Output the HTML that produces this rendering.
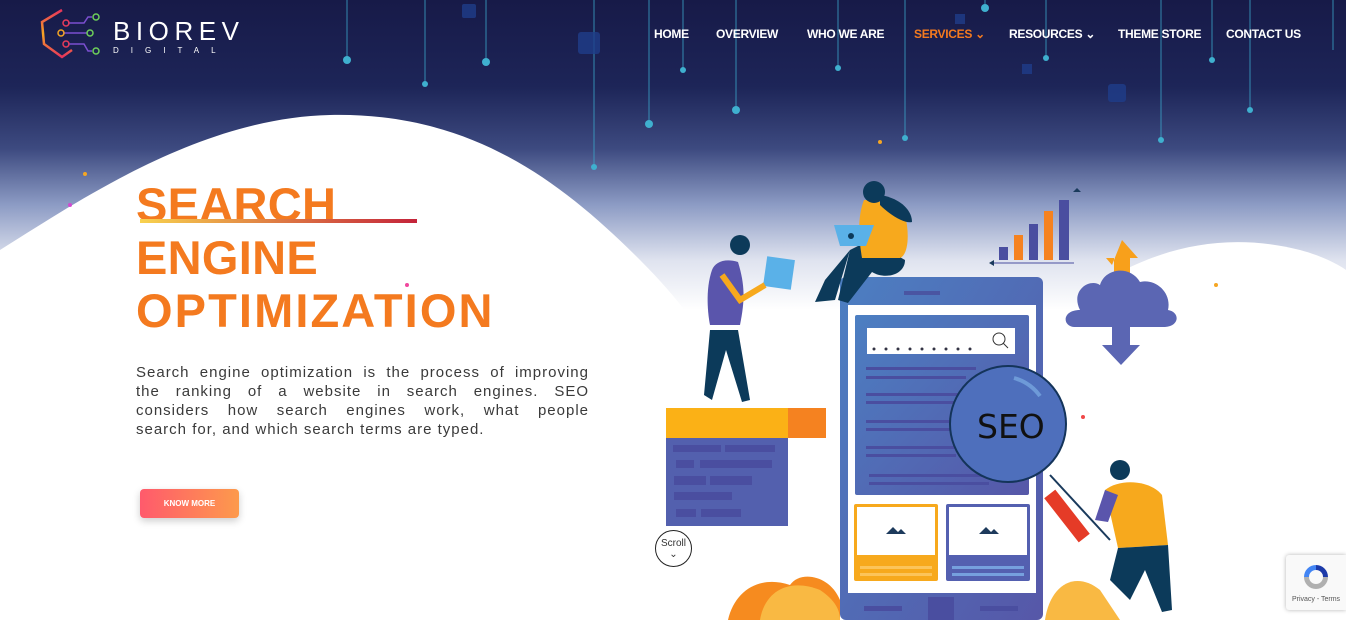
<!DOCTYPE html>
<html><head><meta charset="utf-8"><style>
*{margin:0;padding:0;box-sizing:border-box}
body{width:1346px;height:620px;overflow:hidden;position:relative;font-family:"Liberation Sans",sans-serif;background:#fff}
#bg{position:absolute;left:0;top:0}
.nav{position:absolute;top:27px;font-size:12px;font-weight:bold;color:#fff;letter-spacing:-0.3px}
.nav span{position:absolute;white-space:nowrap}
h1{position:absolute;left:136px;top:178px;font-size:47px;line-height:53px;color:#f47a1f;font-weight:bold;letter-spacing:0.3px}
h1 .o{letter-spacing:2.1px}
.ul{position:absolute;left:140px;top:219px;width:277px;height:4px;background:linear-gradient(90deg,#f8d24e,#c4233a)}
.p{position:absolute;left:136px;top:363px;width:453px;font-size:15px;line-height:19px;color:#3a3a3a;letter-spacing:1px}
.p div{text-align:justify;text-align-last:justify;white-space:nowrap}
.p div.l{text-align-last:left}
.btn{position:absolute;left:140px;top:489px;width:99px;height:29px;border-radius:4px;background:linear-gradient(90deg,#ff5a6c,#fd9a4c);color:#fff;font-size:8px;font-weight:bold;text-align:center;line-height:29px;box-shadow:0 3px 8px rgba(0,0,0,.2)}
.scroll{position:absolute;left:655px;top:530px;width:37px;height:37px;border:1px solid #222;border-radius:50%;font-size:10px;text-align:center;padding-top:7px;color:#333;background:#fff}
.cap{position:absolute;left:1286px;top:555px;width:60px;height:55px;background:#f9f9f9;box-shadow:0 0 4px rgba(0,0,0,.3);border-radius:3px 0 0 3px;font-size:7px;color:#555;text-align:center}
</style></head><body>
<svg id="bg" width="1346" height="620" viewBox="0 0 1346 620">
<defs>
<linearGradient id="sky" x1="0" y1="0" x2="0" y2="1">
<stop offset="0" stop-color="#171a48"/><stop offset="0.14" stop-color="#1d2558"/><stop offset="0.24" stop-color="#3d4a80"/><stop offset="0.33" stop-color="#8c9bc4"/><stop offset="0.42" stop-color="#dfe3ef"/><stop offset="0.5" stop-color="#fff"/></linearGradient>
<linearGradient id="ph" x1="0" y1="0" x2="1" y2="1"><stop offset="0" stop-color="#4c7fc2"/><stop offset="1" stop-color="#5657a8"/></linearGradient>
<linearGradient id="lg" x1="0" y1="0" x2="0" y2="1"><stop offset="0" stop-color="#e8345c"/><stop offset=".5" stop-color="#f5a623"/><stop offset="1" stop-color="#e8345c"/></linearGradient>
</defs>
<rect width="1346" height="620" fill="url(#sky)"/>
<path d="M0 250 C80 200 200 118 330 115 C470 112 560 180 640 260 C680 300 700 330 720 360 L720 620 L0 620Z" fill="#fff"/>
<path d="M1090 290 C1150 250 1220 230 1300 250 C1330 258 1346 270 1346 270 L1346 620 L1090 620Z" fill="#fff"/>
<g stroke="#3aa5c9" stroke-width="1" opacity=".8">
<line x1="347" y1="0" x2="347" y2="60"/><line x1="425" y1="0" x2="425" y2="84"/><line x1="486" y1="0" x2="486" y2="62"/><line x1="594" y1="0" x2="594" y2="167"/><line x1="649" y1="0" x2="649" y2="124"/><line x1="683" y1="0" x2="683" y2="70"/><line x1="736" y1="0" x2="736" y2="110"/><line x1="838" y1="0" x2="838" y2="68"/><line x1="905" y1="0" x2="905" y2="138"/><line x1="1046" y1="0" x2="1046" y2="58"/><line x1="1161" y1="0" x2="1161" y2="140"/><line x1="1212" y1="0" x2="1212" y2="60"/><line x1="1250" y1="0" x2="1250" y2="110"/><line x1="1333" y1="0" x2="1333" y2="50"/><line x1="985" y1="0" x2="985" y2="8"/>
</g>
<g fill="#3fb0cf"><circle cx="347" cy="60" r="4"/><circle cx="425" cy="84" r="3"/><circle cx="486" cy="62" r="4"/><circle cx="594" cy="167" r="3"/><circle cx="649" cy="124" r="4"/><circle cx="683" cy="70" r="3"/><circle cx="736" cy="110" r="4"/><circle cx="838" cy="68" r="3"/><circle cx="905" cy="138" r="3"/><circle cx="1046" cy="58" r="3"/><circle cx="1161" cy="140" r="3"/><circle cx="1212" cy="60" r="3"/><circle cx="1250" cy="110" r="3"/><circle cx="985" cy="8" r="4"/></g>
<g fill="#1f3d8a" opacity=".8"><rect x="462" y="4" width="14" height="14" rx="2"/><rect x="578" y="32" width="22" height="22" rx="3"/><rect x="1022" y="64" width="10" height="10"/><rect x="1108" y="84" width="18" height="18" rx="3"/><rect x="955" y="14" width="10" height="10"/></g>
<g fill="#f5a623"><circle cx="85" cy="174" r="2"/><circle cx="880" cy="142" r="2"/><circle cx="1216" cy="285" r="2"/></g>
<circle cx="70" cy="205" r="2" fill="#d24bd0"/><circle cx="407" cy="285" r="2" fill="#f0479e"/><circle cx="1083" cy="417" r="2" fill="#f04848"/>
<path d="M62 10 L42 22 L44 44 L62 57 L72 50" fill="none" stroke="url(#lg)" stroke-width="2.5"/>
<g stroke="#7b4fd0" stroke-width="1.5" fill="none"><path d="M68 23 H84 L88 17 H92"/><path d="M63 33 H87"/><path d="M68 44 H84 L88 51 H92"/></g>
<circle cx="66" cy="23" r="3" fill="none" stroke="#e83b5a" stroke-width="1.5"/><circle cx="61" cy="33" r="3" fill="none" stroke="#f5a623" stroke-width="1.5"/><circle cx="66" cy="44" r="3" fill="none" stroke="#e83b5a" stroke-width="1.5"/>
<g fill="none" stroke="#6ecf5a" stroke-width="1.5"><circle cx="96" cy="17" r="3"/><circle cx="90" cy="33" r="3"/><circle cx="96" cy="51" r="3"/></g>
<text x="113" y="40" fill="#fff" font-size="26" font-family="Liberation Sans" letter-spacing="1" textLength="127">BIOREV</text>
<text x="113" y="53" fill="#fff" font-size="8" font-family="Liberation Sans" letter-spacing="12">DIGITAL</text>
<path d="M728 620 C735 590 760 575 790 585 C800 570 830 575 840 600 L840 620Z" fill="#f68b1f"/>
<path d="M760 620 C765 590 790 578 820 590 C835 600 840 610 840 620Z" fill="#f9b943"/>
<path d="M1045 620 C1050 585 1075 570 1100 590 L1120 620Z" fill="#f9b943"/>
<rect x="840" y="277" width="203" height="343" rx="6" fill="url(#ph)"/>
<rect x="848" y="305" width="188" height="288" fill="#fff"/>
<rect x="904" y="291" width="36" height="4" fill="#4a55a2"/>
<rect x="855" y="315" width="174" height="180" rx="2" fill="url(#ph)"/>
<rect x="867" y="328" width="148" height="26" fill="#fff"/>
<g fill="#334"><circle cx="874" cy="349" r="1.5"/><circle cx="886" cy="349" r="1.5"/><circle cx="898" cy="349" r="1.5"/><circle cx="910" cy="349" r="1.5"/><circle cx="922" cy="349" r="1.5"/><circle cx="934" cy="349" r="1.5"/><circle cx="946" cy="349" r="1.5"/><circle cx="958" cy="349" r="1.5"/><circle cx="970" cy="349" r="1.5"/></g>
<circle cx="999" cy="339" r="6" fill="none" stroke="#333"/><line x1="1003" y1="343" x2="1008" y2="348" stroke="#333"/>
<g fill="#4a4ea0"><rect x="866" y="367" width="110" height="3"/><rect x="866" y="376" width="100" height="3"/><rect x="866" y="393" width="100" height="3"/><rect x="866" y="401" width="90" height="3"/><rect x="866" y="420" width="90" height="3"/><rect x="866" y="428" width="90" height="3"/><rect x="866" y="446" width="90" height="3"/><rect x="866" y="454" width="90" height="3"/><rect x="869" y="474" width="120" height="3"/><rect x="869" y="482" width="120" height="3"/></g>
<rect x="854" y="504" width="84" height="77" rx="2" fill="#f7a91d"/><rect x="857" y="507" width="78" height="48" fill="#fff"/>
<rect x="946" y="504" width="84" height="77" rx="2" fill="#5460b0"/><rect x="949" y="507" width="78" height="48" fill="#fff"/>
<path d="M886 534 L893 527 L898 532 L901 529 L906 534Z" fill="#1d3a5c"/><path d="M979 534 L986 527 L991 532 L994 529 L999 534Z" fill="#1d3a5c"/>
<g fill="#fcc45a"><rect x="860" y="566" width="72" height="3"/><rect x="860" y="573" width="72" height="3"/></g>
<g fill="#76a0de"><rect x="952" y="566" width="72" height="3"/><rect x="952" y="573" width="72" height="3"/></g>
<rect x="928" y="597" width="26" height="23" fill="#4a4ea0"/><rect x="864" y="606" width="38" height="5" fill="#4a4ea0"/><rect x="980" y="606" width="38" height="5" fill="#4a4ea0"/>
<line x1="1050" y1="475" x2="1110" y2="540" stroke="#1a3a5c" stroke-width="2"/>
<rect x="1060" y="488" width="14" height="56" fill="#e53b27" transform="rotate(-38 1067 516)"/>
<circle cx="1008" cy="424" r="58" fill="#4e6fbc" stroke="#14345a" stroke-width="2"/>
<path d="M1014 378 A48 48 0 0 1 1040 396" stroke="#6e9ad8" stroke-width="4" fill="none"/>
<text x="977" y="438" font-family="DejaVu Sans" font-size="33" fill="#111">SEO</text>
<rect x="666" y="408" width="122" height="30" fill="#fbb116"/><rect x="788" y="408" width="38" height="30" fill="#f58220"/>
<rect x="666" y="438" width="122" height="88" fill="#5360ae"/>
<g fill="#4a4ea0"><rect x="673" y="445" width="48" height="7"/><rect x="725" y="445" width="50" height="7"/><rect x="676" y="460" width="18" height="8"/><rect x="700" y="460" width="72" height="8"/><rect x="674" y="476" width="32" height="9"/><rect x="710" y="476" width="42" height="9"/><rect x="674" y="492" width="58" height="8"/><rect x="676" y="509" width="20" height="8"/><rect x="701" y="509" width="40" height="8"/></g>
<path d="M704 395 L710 330 L738 330 L750 400 L742 402 L726 350 L712 400Z" fill="#0c3a5a"/>
<path d="M712 270 C705 290 708 315 710 325 L740 325 C745 300 745 285 738 262 C725 258 715 262 712 270Z" fill="#5a55ac"/>
<circle cx="740" cy="245" r="10" fill="#0c3a5a"/>
<rect x="765" y="258" width="28" height="30" fill="#5ab1e8" transform="rotate(8 779 273)"/>
<path d="M722 275 L740 300 L765 285" stroke="#f7a91d" stroke-width="6" fill="none"/>
<path d="M850 250 L870 240 L905 260 C905 275 885 280 872 272 L848 303 L838 300Z M835 300 L815 302 L825 280 L850 250Z" fill="#0c3a5a"/>
<path d="M864 200 C880 200 895 205 905 215 C910 235 908 255 900 258 L862 258 C858 235 858 215 864 200Z" fill="#f7a91d"/>
<circle cx="874" cy="192" r="11" fill="#0c3a5a"/><path d="M880 195 C900 198 912 210 912 222 C905 224 890 215 880 205Z" fill="#0c3a5a"/>
<path d="M834 225 L874 225 L866 246 L840 246Z" fill="#5ab1e8"/><circle cx="851" cy="236" r="3" fill="#0c3a5a"/>
<circle cx="1120" cy="470" r="10" fill="#0c3a5a"/>
<path d="M1105 490 C1120 478 1150 480 1162 495 L1168 545 L1118 548Z" fill="#f7a91d"/>
<path d="M1105 490 L1095 520 L1108 522 L1118 495Z" fill="#5a55ac"/>
<path d="M1118 548 L1168 545 L1172 610 L1162 612 L1145 570 L1130 600 L1110 580Z" fill="#0c3a5a"/>
<g><rect x="999" y="247" width="9" height="13" fill="#4a4ea0"/><rect x="1014" y="235" width="9" height="25" fill="#f58220"/><rect x="1029" y="224" width="9" height="36" fill="#4a4ea0"/><rect x="1044" y="211" width="9" height="49" fill="#f58220"/><rect x="1059" y="200" width="10" height="60" fill="#4a4ea0"/></g>
<line x1="993" y1="263" x2="1074" y2="263" stroke="#4a4ea0"/><path d="M989 263 L994 260 L994 266Z" fill="#1a3a5c"/><path d="M1077 188 L1073 192 L1081 192Z" fill="#1a3a5c"/>
<path d="M1112 265 L1122 240 L1138 258 L1130 258 L1130 290 L1114 290 L1114 258 L1106 258Z" fill="#f8a01b"/>
<path d="M1080 310 C1070 290 1090 278 1100 285 C1105 268 1130 265 1140 282 C1155 278 1172 292 1168 310 C1180 312 1180 326 1165 327 L1074 327 C1062 326 1062 310 1080 310Z" fill="#5b66b3"/>
<path d="M1112 327 L1130 327 L1130 345 L1140 345 L1121 365 L1102 345 L1112 345Z" fill="#5b66b3"/>
</svg>
<div class="nav">
<span style="left:654px">HOME</span>
<span style="left:716px">OVERVIEW</span>
<span style="left:807px">WHO WE ARE</span>
<span style="left:914px;color:#f47a1f">SERVICES ⌄</span>
<span style="left:1009px">RESOURCES ⌄</span>
<span style="left:1118px">THEME STORE</span>
<span style="left:1226px">CONTACT US</span>
</div>
<h1>SEARCH<br>ENGINE<br><span class="o">OPTIMIZATION</span></h1>
<div class="ul"></div>
<div class="p">
<div>Search engine optimization is the process of improving</div>
<div>the ranking of a website in search engines. SEO</div>
<div>considers how search engines work, what people</div>
<div class="l">search for, and which search terms are typed.</div>
</div>
<div class="btn">KNOW MORE</div>
<div class="scroll">Scroll<br>⌄</div>
<div class="cap"><svg width="34" height="34" viewBox="0 0 34 34" style="margin-top:5px"><path d="M17 5 A12 12 0 0 1 29 17 L24 17 A7 7 0 0 0 17 10Z" fill="#1c3aa9"/><path d="M5 17 A12 12 0 0 1 17 5 L17 10 A7 7 0 0 0 10 17Z" fill="#4285f4"/><path d="M29 17 A12 12 0 0 1 5 17 L10 17 A7 7 0 0 0 24 17Z" fill="#b0b0b0"/></svg><div>Privacy - Terms</div></div>
</body></html>
